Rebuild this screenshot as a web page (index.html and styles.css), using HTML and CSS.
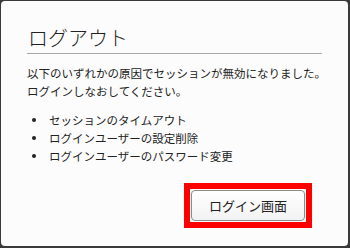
FILE: index.html
```html
<!DOCTYPE html>
<html lang="ja">
<head>
<meta charset="utf-8">
<link rel="stylesheet" href="styles.css">
</head>
<body>
<div class="frame">
  <div class="dialog">
    <h1 class="title">ログアウト</h1>
    <div class="rule"></div>
    <p class="message">以下のいずれかの原因でセッションが無効になりました。<br>ログインしなおしてください。</p>
    <ul class="reasons">
      <li class="reason"><span class="dot"></span><span>セッションのタイムアウト</span></li>
      <li class="reason"><span class="dot"></span><span>ログインユーザーの設定削除</span></li>
      <li class="reason"><span class="dot"></span><span>ログインユーザーのパスワード変更</span></li>
    </ul>
    <div class="actions">
      <div class="highlight">
        <button class="login-btn" type="button">ログイン画面</button>
      </div>
    </div>
  </div>
</div>
</body>
</html>
```

FILE: styles.css
```css
html, body {
  margin: 0;
  padding: 0;
}
body {
  width: 350px;
  height: 248px;
  overflow: hidden;
  font-family: "Noto Sans CJK JP", "Noto Sans", sans-serif;
  color: #222;
}
.frame {
  box-sizing: border-box;
  width: 350px;
  height: 248px;
  padding: 1px 2px 2px 1px;
  background: #3a3a3a;
}
.dialog {
  box-sizing: border-box;
  height: 100%;
  background: #fcfcfc;
  border-radius: 4px;
  padding: 25px 26px 0 26px;
  display: flex;
  flex-direction: column;
}
.title {
  margin: 0;
  font-size: 20px;
  line-height: 24px;
  font-weight: 300;
  color: #222;
  padding-left: 1px;
}
.rule {
  margin-top: 3px;
  height: 1px;
  background: #a8a8a8;
}
.message {
  margin: 10px 0 0 0;
  font-size: 11.5px;
  line-height: 18px;
  white-space: nowrap;
}
.reasons {
  list-style: none;
  margin: 11px 0 0 0;
  padding: 0;
  font-size: 11.5px;
  line-height: 18px;
}
.reason {
  display: flex;
  align-items: center;
  white-space: nowrap;
}
.dot {
  width: 4px;
  height: 4px;
  border-radius: 50%;
  background: #222;
  margin-left: 5px;
  margin-right: 13px;
  flex: none;
}
.actions {
  display: flex;
  justify-content: flex-end;
  margin-top: 18px;
  padding-right: 10px;
}
.highlight {
  border: 6px solid #ff0000;
  padding: 1px;
}
.login-btn {
  display: block;
  box-sizing: border-box;
  width: 114px;
  height: 31px;
  border: 1px solid #8c8c8c;
  border-radius: 4px;
  background: linear-gradient(#ffffff, #f2f2f2);
  font-family: "Noto Sans CJK JP", "Noto Sans", sans-serif;
  font-size: 13px;
  color: #222;
  padding: 0;
  margin: 0;
}
```
